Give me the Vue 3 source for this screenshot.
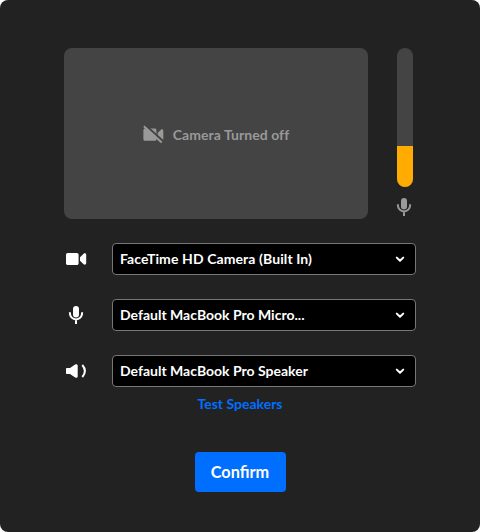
<script setup>
import { ref } from 'vue'

const level = ref(29.5)
const devices = [
  { kind: 'camera', label: 'FaceTime HD Camera (Built In)' },
  { kind: 'mic', label: 'Default MacBook Pro Micro...' },
  { kind: 'speaker', label: 'Default MacBook Pro Speaker' },
]
</script>

<template>
  <main class="dialog">
    <section class="preview-row">
      <div class="preview">
        <svg class="camera-off" width="22" height="20" viewBox="0 0 22 20">
          <path d="M3 3.600h9.800c1 0 1.600.6 1.600 1.600v9c0 1-.6 1.600-1.600 1.600H3c-1 0-1.600-.6-1.600-1.600V5.200c0-1 .6-1.600 1.600-1.600zM15.600 8l3.300-3.300c.8-.7 2.400-.3 2.400.8v8.800c0 1.100-1.600 1.500-2.400.8L15.600 11.800z" />
          <path class="gap" d="M3.400.2L22 17" />
          <path class="slash" d="M1.900 1.200L19.700 17.600" />
        </svg>
        <span>Camera Turned off</span>
      </div>
      <div class="level">
        <div class="meter"><div class="fill" :style="{ height: level + '%' }"></div></div>
        <svg class="level-mic" width="16" height="20" viewBox="0 0 16 20">
          <rect x="5" y="1" width="6" height="11.500" rx="3" />
          <path class="line" d="M1.900 7.300v1a6.100 6.100 0 0 0 12.200 0v-1M8 14.500V19" />
        </svg>
      </div>
    </section>

    <section class="devices">
      <div v-for="d in devices" :key="d.kind" class="device">
        <svg v-if="d.kind === 'camera'" class="icon" width="24" height="20" viewBox="0 0 24 20">
          <path d="M3.800 4h9c1.100 0 1.800.7 1.800 1.800v8.400c0 1.100-.7 1.800-1.800 1.800H3.800C2.700 16 2 15.300 2 14.200V5.800C2 4.700 2.700 4 3.800 4zM16 8.300l3.600-3.500c1-.9 2.600-.3 2.600.9v8.600c0 1.200-1.600 1.800-2.600.9L16 11.700z" />
        </svg>
        <svg v-else-if="d.kind === 'mic'" class="icon" width="24" height="20" viewBox="0 0 24 20">
          <rect x="9" y="1" width="6" height="11.500" rx="3" />
          <path class="line" d="M5.900 7.300v1a6.100 6.100 0 0 0 12.200 0v-1M12 14.500V19" />
        </svg>
        <svg v-else class="icon" width="24" height="20" viewBox="0 0 24 20">
          <path d="M2.800 7H6l5.200-3.500c1-.7 2.500-.1 2.500 1.100v10.800c0 1.200-1.500 1.800-2.500 1.100L6 13H2.800c-.5 0-.8-.3-.8-.8V7.800c0-.5.3-.8.800-.8z" />
          <path class="line" d="M18.300 4q5.200 6 0 12" />
        </svg>
        <button class="select" type="button">
          <span :class="d.kind">{{ d.label }}</span>
          <svg class="chevron" width="10" height="8" viewBox="0 0 10 8"><path d="M1.800 2.600L5 5.800l3.200-3.200" /></svg>
        </button>
      </div>
    </section>

    <a class="test">Test Speakers</a>
    <button class="confirm" type="button">Confirm</button>
  </main>
</template>

<style>
body { background: #fff; }
</style>

<style scoped>
.dialog {
  box-sizing: border-box;
  width: 480px;
  height: 532px;
  padding: 48px 64px 40px;
  border-radius: 8px;
  background: #222;
  color: #fff;
  font-family: Lato, sans-serif;
  font-size: 14px;
  font-weight: 700;
  line-height: 20px;
  display: flex;
  flex-direction: column;
  align-items: center;
}
.preview-row { display: flex; width: 352px; height: 171px; gap: 28px; }
.preview {
  width: 304px;
  height: 171px;
  border-radius: 8px;
  background: #444;
  color: #999;
  display: flex;
  align-items: center;
  justify-content: center;
  gap: 9px;
  padding: 2px 1px 0 0;
  box-sizing: border-box;
}
.preview span { letter-spacing: .05px; }
.camera-off { fill: #999; }
.gap { stroke: #444; stroke-width: 2.200; }
.slash { stroke: #999; stroke-width: 2; }
.level { width: 16px; display: flex; flex-direction: column; align-items: center; gap: 10px; flex: none; margin-left: 1px; }
.meter {
  width: 16px;
  height: 139px;
  border-radius: 8px;
  overflow: hidden;
  background: #444;
  display: flex;
  align-items: flex-end;
}
.fill { width: 100%; background: #ffab00; }
.level-mic { fill: #999; stroke: none; flex: none; margin-right: 2px; }
.line { fill: none; stroke: #fff; stroke-width: 2; }
.level-mic .line { stroke: #999; }
.devices { width: 352px; margin-top: 24px; display: flex; flex-direction: column; gap: 24px; }
.device { display: flex; align-items: center; gap: 24px; height: 32px; }
.icon { fill: #fff; flex: none; }
.select {
  box-sizing: border-box;
  width: 304px;
  height: 32px;
  padding: 0 10px 0 7px;
  border: 1px solid #777;
  border-radius: 4px;
  background: #000;
  color: #fff;
  font: inherit;
  display: flex;
  align-items: center;
  justify-content: space-between;
}
.select .camera { letter-spacing: .1px; }
.chevron { fill: none; stroke: #fff; stroke-width: 2; stroke-linecap: round; stroke-linejoin: round; }
.test { margin-top: 7px; color: #006fff; }
.confirm {
  width: 91px;
  height: 40px;
  margin-top: 38px;
  padding: 0;
  border: 0;
  border-radius: 4px;
  background: #006fff;
  color: #fff;
  font: 700 16.300px/24px Lato, sans-serif;
}
</style>
